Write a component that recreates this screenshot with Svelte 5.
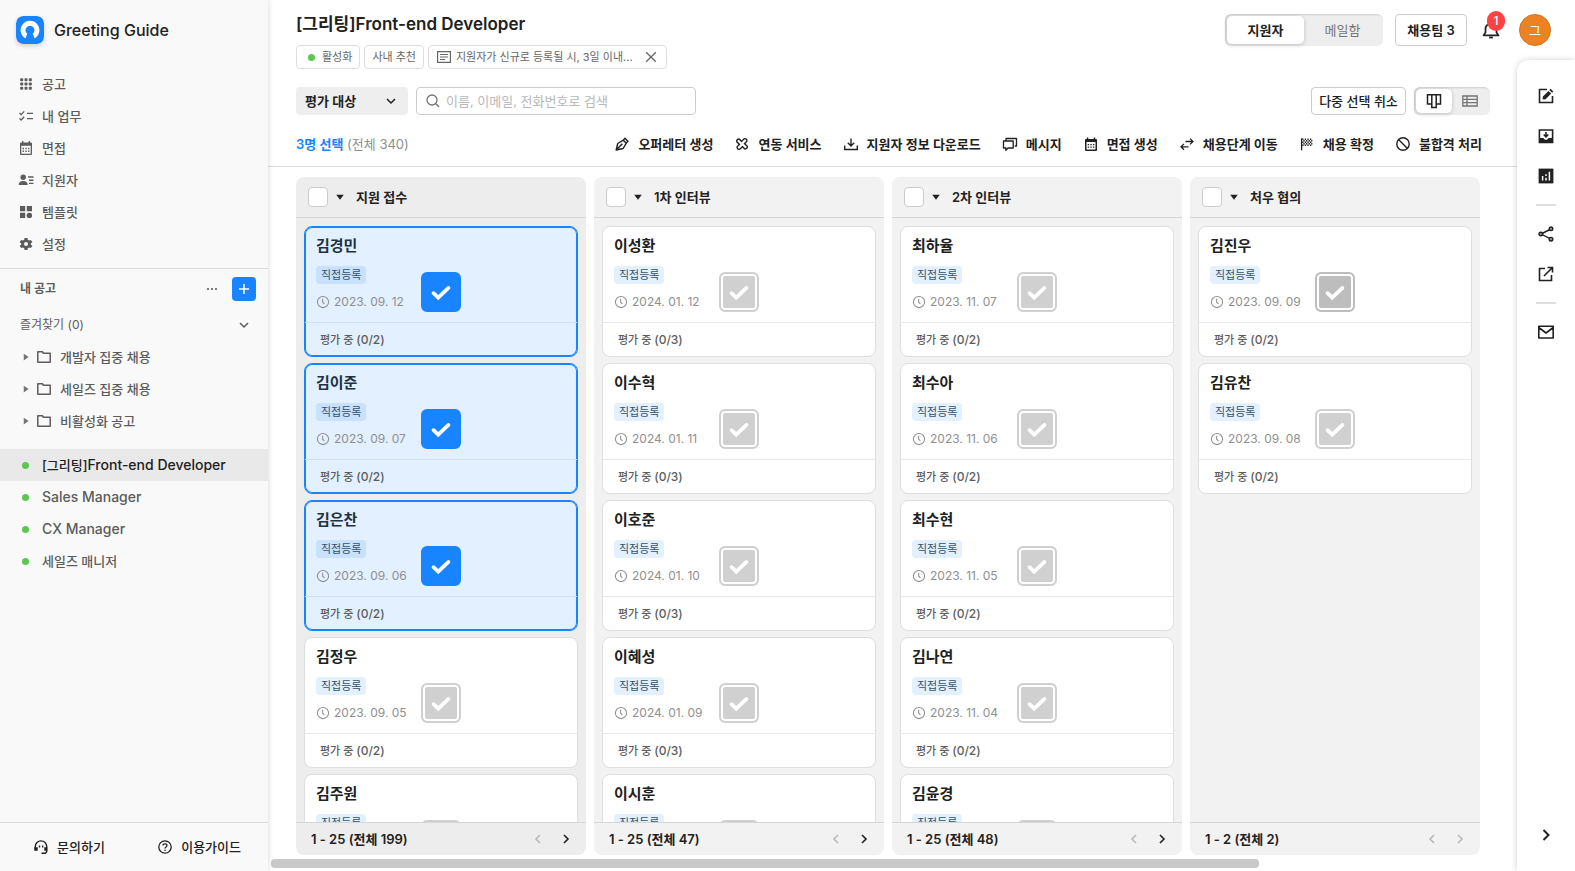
<script lang="ts">
  type Applicant = { name: string; date: string; reviewers: number; selected?: boolean };
  type Stage = { title: string; range: string; total: number; hasNext: boolean; applicants: Applicant[] };

  const menu = [
    { icon: 'apps', label: '공고' },
    { icon: 'tasks', label: '내 업무' },
    { icon: 'calendarFill', label: '면접' },
    { icon: 'people', label: '지원자' },
    { icon: 'widgets', label: '템플릿' },
    { icon: 'gear', label: '설정' },
  ];

  const folders = ['개발자 집중 채용', '세일즈 집중 채용', '비활성화 공고'];

  const openings = [
    { korean: '', label: 'Sales Manager' },
    { korean: '', label: 'CX Manager' },
    { korean: '세일즈 매니저', label: '' },
  ];

  const actions = [
    { icon: 'pen', label: '오퍼레터 생성' },
    { icon: 'link', label: '연동 서비스' },
    { icon: 'download', label: '지원자 정보 다운로드' },
    { icon: 'chat', label: '메시지' },
    { icon: 'calendar', label: '면접 생성' },
    { icon: 'swap', label: '채용단계 이동' },
    { icon: 'flag', label: '채용 확정' },
    { icon: 'ban', label: '불합격 처리' },
  ];

  const tools = [
    [
      { icon: 'edit', label: '작성' },
      { icon: 'inbox', label: '보관' },
      { icon: 'chart', label: '통계' },
    ],
    [
      { icon: 'share', label: '공유' },
      { icon: 'external', label: '새 창' },
    ],
    [{ icon: 'mail', label: '메일' }],
  ];

  let stages: Stage[] = $state([
    {
      title: '지원 접수', range: '1 - 25', total: 199, hasNext: true,
      applicants: [
        { name: '김경민', date: '2023. 09. 12', reviewers: 2, selected: true },
        { name: '김이준', date: '2023. 09. 07', reviewers: 2, selected: true },
        { name: '김은찬', date: '2023. 09. 06', reviewers: 2, selected: true },
        { name: '김정우', date: '2023. 09. 05', reviewers: 2 },
        { name: '김주원', date: '2023. 09. 04', reviewers: 2 },
      ],
    },
    {
      title: '1차 인터뷰', range: '1 - 25', total: 47, hasNext: true,
      applicants: [
        { name: '이성환', date: '2024. 01. 12', reviewers: 3 },
        { name: '이수혁', date: '2024. 01. 11', reviewers: 3 },
        { name: '이호준', date: '2024. 01. 10', reviewers: 3 },
        { name: '이혜성', date: '2024. 01. 09', reviewers: 3 },
        { name: '이시훈', date: '2024. 01. 08', reviewers: 3 },
      ],
    },
    {
      title: '2차 인터뷰', range: '1 - 25', total: 48, hasNext: true,
      applicants: [
        { name: '최하율', date: '2023. 11. 07', reviewers: 2 },
        { name: '최수아', date: '2023. 11. 06', reviewers: 2 },
        { name: '최수현', date: '2023. 11. 05', reviewers: 2 },
        { name: '김나연', date: '2023. 11. 04', reviewers: 2 },
        { name: '김윤경', date: '2023. 11. 03', reviewers: 2 },
      ],
    },
    {
      title: '처우 협의', range: '1 - 2', total: 2, hasNext: false,
      applicants: [
        { name: '김진우', date: '2023. 09. 09', reviewers: 2 },
        { name: '김유찬', date: '2023. 09. 08', reviewers: 2 },
      ],
    },
  ]);

  let selectedCount = $derived(stages.flatMap((s) => s.applicants).filter((a) => a.selected).length);

  // 16x16 grid, drawn with currentColor
  const icons: Record<string, string> = {
    apps: '<g fill="currentColor"><rect x="2.2" y="2.2" width="3" height="3" rx=".8"/><rect x="6.5" y="2.2" width="3" height="3" rx=".8"/><rect x="10.8" y="2.2" width="3" height="3" rx=".8"/><rect x="2.2" y="6.5" width="3" height="3" rx=".8"/><rect x="6.5" y="6.5" width="3" height="3" rx=".8"/><rect x="10.8" y="6.5" width="3" height="3" rx=".8"/><rect x="2.2" y="10.8" width="3" height="3" rx=".8"/><rect x="6.5" y="10.8" width="3" height="3" rx=".8"/><rect x="10.8" y="10.8" width="3" height="3" rx=".8"/></g>',
    tasks: '<path d="M1.5 5l1.6 1.6L6.2 3.4M1.5 10.4L3.1 12l3.1-3.2M9 5.3h6M9 10.7h6" stroke="currentColor" stroke-width="1.3" fill="none"/>',
    calendarFill: '<path fill-rule="evenodd" d="M4 1h1.4v1.5h5.2V1H12v1.5h1a1 1 0 0 1 1 1V14a1 1 0 0 1-1 1H3a1 1 0 0 1-1-1V3.5a1 1 0 0 1 1-1h1zM3.3 5.8v7.900h9.400V5.800z" fill="currentColor"/><path d="M4.600 8.500h1.400M7.300 8.500h1.400M10 8.500h1.400M4.600 11.200h1.400M7.300 11.200h1.400M10 11.200h1.400" stroke="currentColor" stroke-width="1.400"/>',
    calendar: '<path fill-rule="evenodd" d="M3.8 1.500h1.500v1.500h5.400V1.500h1.500V3h.8a1 1 0 0 1 1 1v10a1 1 0 0 1-1 1H3a1 1 0 0 1-1-1V4a1 1 0 0 1 1-1h.8zM3.500 6v7.500h9V6z" fill="currentColor"/><path d="M4.700 8.600h1.400M7.300 8.600h1.400M9.900 8.600h1.400M4.700 11.200h1.400M7.300 11.200h1.400M9.900 11.200h1.400" stroke="currentColor" stroke-width="1.300"/>',
    people: '<circle cx="5.200" cy="5.300" r="2.700" fill="currentColor"/><path d="M.7 13c0-2.500 1.600-3.900 4.500-3.900s4.500 1.400 4.500 3.900z" fill="currentColor"/><path d="M10 5h5.500M11 8.200h4.500M11 11.400h4.500" stroke="currentColor" stroke-width="1.400"/>',
    widgets: '<path d="M2 2h5.200v5.200H2zM8.800 2H14v5.200H8.800zM2 8.800h5.200V14H2z" fill="currentColor"/><circle cx="11.400" cy="11.400" r="2.700" fill="currentColor"/>',
    gear: '<path d="M6.500 2h3l.3 1.800 1.400.8 1.700-.7L14.400 6.200l-1.500 1.100v1.400l1.500 1.100-1.500 2.300-1.700-.7-1.400.8-.3 1.800h-3l-.3-1.800-1.400-.8-1.700.7L1.600 9.800l1.500-1.100V7.300L1.600 6.200l1.500-2.300 1.700.7 1.400-.8z" fill="currentColor"/><circle cx="8" cy="8" r="2" fill="#f9f9f9"/>',
    more: '<g fill="currentColor"><circle cx="4" cy="8" r="1.100"/><circle cx="8" cy="8" r="1.100"/><circle cx="12" cy="8" r="1.100"/></g>',
    plus: '<path d="M8 3v10M3 8h10" stroke="currentColor" stroke-width="1.500"/>',
    down: '<path d="M4 6l4 4 4-4" stroke="currentColor" stroke-width="1.500" fill="none"/>',
    left: '<path d="M10 4L6 8l4 4" stroke="currentColor" stroke-width="1.600" fill="none"/>',
    right: '<path d="M6 4l4 4-4 4" stroke="currentColor" stroke-width="1.600" fill="none"/>',
    caretRight: '<path d="M5 3.500v9l6.500-4.500z" fill="currentColor"/>',
    caretDown: '<path d="M3 5h10l-5 6.500z" fill="currentColor"/>',
    folder: '<path d="M1.800 13.200V2.800h4.600l1 1.400h6.800v9z" stroke="currentColor" stroke-width="1.500" fill="none" stroke-linejoin="round"/>',
    headset: '<path d="M2.300 10.200V7.600a5.700 5.700 0 0 1 11.400 0v5.200l-1.300 1.400H8.500" stroke="currentColor" stroke-width="1.400" fill="none"/><path d="M1.300 8.200h3.400v3.600H1.300zM11.300 8.200h3v3.600h-3zM5.800 6.500h1.400v2H5.800zM9 6.500h1.400v2H9z" fill="currentColor"/>',
    help: '<circle cx="8" cy="8" r="6.200" stroke="currentColor" stroke-width="1.300" fill="none"/><path d="M6 6.600c0-2.400 4-2.400 4 0 0 1.400-2 1.400-2 3" stroke="currentColor" stroke-width="1.200" fill="none"/><circle cx="8" cy="11.300" r=".8" fill="currentColor"/>',
    note: '<path d="M1.600 2.600h12.800v10.800H1.600zM4 5.500h8M4 8h8M4 10.500h5" stroke="currentColor" stroke-width="1.200" fill="none"/>',
    close: '<path d="M3.200 3.200l9.600 9.600M12.800 3.200l-9.600 9.600" stroke="currentColor" stroke-width="1.300"/>',
    search: '<circle cx="7" cy="7" r="5" stroke="currentColor" stroke-width="1.300" fill="none"/><path d="M10.600 10.600L14 14" stroke="currentColor" stroke-width="1.400"/>',
    pen: '<path d="M2.200 14l1.500-6.500 5.600-3.300 3 3-3.200 5.300zM2.200 14l4.900-4.900M9.500 4L11 2.200l3 3L12.300 7" stroke="currentColor" stroke-width="1.400" fill="none" stroke-linejoin="round"/><circle cx="7.600" cy="8.600" r="1" fill="currentColor"/>',
    link: '<path d="M7.200 5L5.400 3.200a2 2 0 0 0-2.600 2.600L5.600 8.600M11 7.200l1.800-1.800a2 2 0 0 0-2.600-2.600L7.400 5.600M8.800 11l1.800 1.800a2 2 0 0 0 2.600-2.600L10.400 7.400M5 8.800l-1.800 1.800a2 2 0 0 0 2.600 2.600l2.800-2.800" stroke="currentColor" stroke-width="1.400" fill="none" stroke-linecap="round"/>',
    download: '<path d="M8 2.500v7M4.800 6.700L8 9.900l3.200-3.200M1.700 9.500v4h12.600v-4" stroke="currentColor" stroke-width="1.400" fill="none"/>',
    chat: '<path d="M4 4.200V2.500h10.500V10h-1.800M1.500 5h9.700v7H6L3.800 14.300V12H1.500z" stroke="currentColor" stroke-width="1.300" fill="none" stroke-linejoin="round"/>',
    swap: '<path d="M6.500 5.500h7.300M11 2.600l3 2.900-3 2.900M9.500 10.800H2.200M5 7.900l-3 2.900 3 2.900" stroke="currentColor" stroke-width="1.300" fill="none"/>',
    flag: '<path d="M2.600 2.300v12" stroke="currentColor" stroke-width="1.300"/><path d="M3.200 3.200h9.300M4.400 4.700h9M3.200 6.200h9.300M4.400 7.700h9M3.200 9.200h9.300" stroke="currentColor" stroke-width="1.400" stroke-dasharray="1.300 1.300"/>',
    ban: '<circle cx="8" cy="8" r="6.200" stroke="currentColor" stroke-width="1.400" fill="none"/><path d="M3.800 3.800l8.400 8.400" stroke="currentColor" stroke-width="1.400"/>',
    board: '<path d="M1.500 1.800h4.300v9.200H1.500zM5.800 1.800h4.400v12.700H5.800zM10.200 1.800h4.300v9.200h-4.300z" stroke="currentColor" stroke-width="1.500" fill="none"/>',
    table: '<path d="M.8 3h14.400v10H.8zM.8 6.300h14.400M.8 9.700h14.400M5 3v10" stroke="currentColor" stroke-width="1.300" fill="none"/>',
    bell: '<path d="M2 12.300h12L12.400 10V7.200a4.400 4.400 0 0 0-8.800 0V10z" stroke="currentColor" stroke-width="1.400" fill="none" stroke-linejoin="round"/><path d="M6.500 14h3" stroke="currentColor" stroke-width="1.500"/>',
    edit: '<path d="M9 1.500H1.500v13h13V8" stroke="currentColor" stroke-width="1.600" fill="none"/><path d="M4.600 11.500l.3-3 5.600-5.600 2.700 2.700-5.600 5.700zM11.400 2l1.200-1.200 2.700 2.700-1.200 1.200z" fill="currentColor"/>',
    inbox: '<path fill-rule="evenodd" d="M.6 1.300h14.800v13.900H.6zM2.200 2.800v7.200h3.300c.5 1.200 1.400 1.800 2.500 1.800s2-.6 2.500-1.800h3.300V2.800z" fill="currentColor"/><path d="M8 4v4.500M5.700 6.500L8 8.800l2.300-2.300" stroke="currentColor" stroke-width="1.600" fill="none"/>',
    chart: '<path d="M.6.6h14.800v14.800H.6z" fill="currentColor"/><path d="M4.600 8v4.500M8 9.800v2.700M8 6.200v1.800M11.400 3.800v8.700" stroke="#fff" stroke-width="1.500"/>',
    share: '<path d="M3 8l10-5M3 8l10 5.200" stroke="currentColor" stroke-width="1.400"/><g fill="#999" stroke="currentColor" stroke-width="1.400"><circle cx="2.800" cy="8" r="1.800"/><circle cx="13" cy="2.800" r="1.800"/><circle cx="13" cy="13.200" r="1.800"/></g>',
    external: '<path d="M7 2.500H1.500v12h12V9M9.500 1.500h5v5M14.200 1.800L6 10" stroke="currentColor" stroke-width="1.600" fill="none"/>',
    mail: '<path d="M.8 2.200h14.400v11.800H.8zM.8 3.500L8 9l7.200-5.500" stroke="currentColor" stroke-width="1.600" fill="none" stroke-linejoin="round"/>',
    clock: '<circle cx="8" cy="8" r="6.400" stroke="currentColor" stroke-width="1.200" fill="none"/><path d="M7.600 4.200v4l2 2" stroke="currentColor" stroke-width="1.200" fill="none"/>',
    check: '<path d="M3.400 8.700l2.900 2.800L12.600 5.500" stroke="currentColor" stroke-width="2.300" fill="none" stroke-linecap="round"/>',
  };
</script>

{#snippet icon(name: string, size = 16)}
  <svg width={size} height={size} viewBox="0 0 16 16" aria-hidden="true">{@html icons[name]}</svg>
{/snippet}

<div class="app">
  <aside class="sidebar">
    <div class="brand">
      <svg class="logo" width="28" height="28" viewBox="0 0 28 28" aria-hidden="true">
        <rect width="28" height="28" rx="7" fill="#1884ff" />
        <path d="M9.600 22.400A9.400 9.400 0 1 1 18.400 22.400L16.600 17.800A4.500 4.500 0 1 0 11.400 17.800z" fill="#fff" />
        <path d="M11.400 17.500h5.200l1.900 5.500h-9z" fill="#1884ff" />
      </svg>
      <strong>Greeting Guide</strong>
    </div>

    <nav class="menu">
      {#each menu as item}
        <a href="#{item.icon}">{@render icon(item.icon)}{item.label}</a>
      {/each}
    </nav>

    <div class="mine">
      <div class="mine-head">
        <strong>내 공고</strong>
        <button class="more" aria-label="더보기">{@render icon('more')}</button>
        <button class="add" aria-label="공고 추가">{@render icon('plus')}</button>
      </div>
      <button class="favorites">즐겨찾기 (0){@render icon('down')}</button>
      {#each folders as folder}
        <button class="folder">{@render icon('caretRight', 12)}{@render icon('folder')}<span>{folder}</span></button>
      {/each}
    </div>

    <nav class="openings">
      <a href="#frontend" class="active"><i class="dot"></i><span>[그리팅]<span class="latin">Front-end Developer</span></span></a>
      {#each openings as opening}
        <a href="#opening"><i class="dot"></i><span>{opening.korean}<span class="latin">{opening.label}</span></span></a>
      {/each}
    </nav>

    <footer>
      <a href="#contact">{@render icon('headset')}문의하기</a>
      <a href="#guide">{@render icon('help')}이용가이드</a>
    </footer>
  </aside>

  <div class="page">
    <header class="topbar">
      <div class="heading">
        <h1>[그리팅]<span>Front-end Developer</span></h1>
        <div class="chips">
          <span class="chip status"><i class="dot"></i>활성화</span>
          <span class="chip">사내 추천</span>
          <span class="chip memo">
            {@render icon('note')}지원자가 신규로 등록될 시, 3일 이내...
            <button aria-label="메모 닫기">{@render icon('close')}</button>
          </span>
        </div>
      </div>
      <div class="account">
        <div class="segment">
          <button class="on">지원자</button>
          <button>메일함</button>
        </div>
        <button class="outline team">채용팀 3</button>
        <button class="bell" aria-label="알림">{@render icon('bell', 20)}<span class="count">1</span></button>
        <button class="avatar">그</button>
      </div>
    </header>

    <div class="body">
      <main>
        <div class="filters">
          <div class="select">
            <select aria-label="평가 대상"><option>평가 대상</option></select>
            {@render icon('down')}
          </div>
          <label class="search">
            {@render icon('search')}
            <input type="text" placeholder="이름, 이메일, 전화번호로 검색" aria-label="검색" />
          </label>
          <button class="outline cancel">다중 선택 취소</button>
          <div class="segment view">
            <button class="on" aria-label="보드 보기">{@render icon('board')}</button>
            <button aria-label="표 보기">{@render icon('table')}</button>
          </div>
        </div>

        <div class="actions">
          <p><strong>{selectedCount}명 선택</strong> (전체 340)</p>
          {#each actions as action}
            <button>{@render icon(action.icon)}{action.label}</button>
          {/each}
        </div>

        <div class="board">
          {#each stages as stage, i}
            <section class="stage" class:first={i === 0}>
              <div class="stage-head">
                <input type="checkbox" aria-label="{stage.title} 전체 선택" />
                {@render icon('caretDown', 12)}
                <h2>{stage.title}</h2>
              </div>
              <div class="cards">
                {#each stage.applicants as person, j}
                  <article class="card" class:selected={person.selected}>
                    <div class="info">
                      <h3>{person.name}</h3>
                      <span class="badge">직접등록</span>
                      <span class="date">{@render icon('clock', 14)}{person.date}</span>
                    </div>
                    <p>평가 중 <span>(0/{person.reviewers})</span></p>
                    <label class="tick" class:dark={i === 3 && j === 0}>
                      <input type="checkbox" bind:checked={person.selected} aria-label="{person.name} 선택" />
                      {@render icon('check', 26)}
                    </label>
                  </article>
                {/each}
              </div>
              <div class="stage-foot">
                <span>{stage.range} (전체 {stage.total})</span>
                <button disabled aria-label="이전">{@render icon('left')}</button>
                <button disabled={!stage.hasNext} aria-label="다음">{@render icon('right')}</button>
              </div>
            </section>
          {/each}
        </div>
        <div class="scroll"><div></div></div>
      </main>

      <aside class="rail">
        {#each tools as group}
          <div class="group">
            {#each group as tool}
              <button aria-label={tool.label}>{@render icon(tool.icon)}</button>
            {/each}
          </div>
        {/each}
        <button class="collapse" aria-label="접기">{@render icon('right', 20)}</button>
      </aside>
    </div>
  </div>
</div>

<style>
  :global(body) {
    margin: 0;
  }

  .app {
    display: flex;
    height: 100vh;
    overflow: hidden;
    background: #fff;
    color: #212121;
    font: 500 13px/20px Inter, 'Noto Sans CJK KR', sans-serif;
  }

  .app * {
    box-sizing: border-box;
  }

  svg {
    display: block;
    flex: none;
  }

  button,
  input,
  select {
    padding: 0;
    border: 0;
    background: none;
    color: inherit;
    font: inherit;
  }

  a {
    color: inherit;
    text-decoration: none;
  }

  h1,
  h2,
  h3,
  p {
    margin: 0;
  }

  .dot {
    flex: none;
    width: 7px;
    height: 7px;
    border-radius: 50%;
    background: #5bc951;
  }

  .latin {
    font-size: 14px;
  }

  .sidebar {
    display: flex;
    flex: none;
    flex-direction: column;
    width: 268px;
    background: #f9f9f9;
    color: #5c5c5c;
    box-shadow: 0 0 6px rgba(0, 0, 0, 0.16);
    z-index: 1;
  }

  .brand {
    display: flex;
    align-items: center;
    gap: 10px;
    padding: 16px 16px 24px;
    color: #212121;
    font-size: 16px;
  }

  .brand strong {
    font-weight: 500;
  }

  .logo {
    border-radius: 7px;
    box-shadow: 0 2px 4px rgba(0, 0, 0, 0.16);
  }

  .menu {
    padding-bottom: 8px;
    border-bottom: 1px solid #dcdcdc;
  }

  .menu a {
    display: flex;
    align-items: center;
    gap: 8px;
    height: 32px;
    padding-left: 18px;
  }

  .mine-head {
    display: flex;
    align-items: center;
    padding: 8px 12px 8px 20px;
    font-size: 12px;
  }

  .mine-head strong {
    flex: 1;
    font-weight: 600;
  }

  .more {
    margin-right: 12px;
  }

  .add {
    padding: 4px;
    border-radius: 4px;
    background: #1884ff;
    color: #fff;
  }

  .favorites {
    display: flex;
    align-items: center;
    justify-content: space-between;
    width: 100%;
    height: 32px;
    padding: 0 16px 0 20px;
    font-size: 12px;
    font-weight: 400;
  }

  .folder {
    display: flex;
    align-items: center;
    width: 100%;
    height: 32px;
    padding-left: 20px;
  }

  .folder svg:first-child {
    margin-right: 4px;
    color: #757575;
  }

  .folder span {
    margin-left: 8px;
  }

  .openings {
    flex: 1;
    padding-top: 12px;
  }

  .openings a {
    display: flex;
    align-items: center;
    gap: 13px;
    height: 32px;
    padding-left: 22px;
  }

  .openings .active {
    background: #e9e9e9;
    color: #212121;
  }

  .sidebar footer {
    display: flex;
    align-items: center;
    justify-content: space-between;
    height: 49px;
    padding: 0 27px 0 33px;
    border-top: 1px solid #dcdcdc;
    color: #212121;
  }

  .sidebar footer a {
    display: flex;
    align-items: center;
    gap: 8px;
  }

  .page {
    display: flex;
    flex: 1;
    flex-direction: column;
    min-width: 0;
  }

  .topbar {
    display: flex;
    justify-content: space-between;
    height: 60px;
    padding: 12px 24px 0 28px;
  }

  h1 {
    font-size: 17px;
    font-weight: 600;
    line-height: 24px;
  }

  .chips {
    display: flex;
    gap: 4px;
    margin-top: 9px;
    color: #666;
    font-size: 11px;
    font-weight: 400;
  }

  .chip {
    display: flex;
    align-items: center;
    height: 24px;
    padding: 0 7px;
    border: 1px solid #dedede;
    border-radius: 4px;
    white-space: nowrap;
  }

  .status {
    gap: 7px;
    padding-left: 11px;
  }

  .memo {
    gap: 4px;
  }

  .memo button {
    margin-left: 6px;
  }

  .account {
    display: flex;
    align-items: center;
    height: 32px;
    margin-top: 2px;
  }

  .segment {
    display: flex;
    padding: 2px;
    border-radius: 6px;
    background: #eee;
    box-shadow: inset 1px 1px 2px rgba(0, 0, 0, 0.14);
  }

  .segment button {
    display: grid;
    place-items: center;
    width: 77px;
    height: 28px;
    border-radius: 5px;
    color: #757575;
    font-weight: 400;
  }

  .segment .on {
    background: #fff;
    color: #212121;
    font-weight: 600;
    box-shadow: 0 1px 4px rgba(0, 0, 0, 0.2);
  }

  .outline {
    border: 1px solid #ccc;
    border-radius: 4px;
  }

  .team {
    width: 72px;
    height: 32px;
    margin: 0 14px 0 12px;
    font-weight: 600;
  }

  .bell {
    position: relative;
    margin-right: 18px;
  }

  .count {
    position: absolute;
    top: -9px;
    right: -4px;
    width: 18px;
    height: 20px;
    border-radius: 10px;
    background: #ff4242;
    color: #fff;
    font-size: 12px;
  }

  .avatar {
    width: 32px;
    height: 32px;
    border: 1px solid #c9762b;
    border-radius: 50%;
    background: #ee8222;
    color: #fff;
    font-size: 13px;
    font-weight: 400;
  }

  .body {
    display: flex;
    flex: 1;
    min-height: 0;
  }

  main {
    display: flex;
    flex: 1;
    flex-direction: column;
    min-width: 0;
  }

  .filters {
    display: flex;
    gap: 8px;
    padding: 27px 27px 0 28px;
  }

  .select {
    display: grid;
    align-items: center;
    width: 112px;
    height: 28px;
    border-radius: 4px;
    background: #eee;
    font-weight: 600;
  }

  .select > * {
    grid-area: 1 / 1;
  }

  .select select {
    height: 28px;
    padding: 0 9px;
    appearance: none;
  }

  .select svg {
    justify-self: end;
    margin-right: 9px;
    pointer-events: none;
  }

  .search {
    display: flex;
    align-items: center;
    gap: 5px;
    width: 280px;
    height: 28px;
    padding: 0 8px;
    border: 1px solid #ccc;
    border-radius: 4px;
    color: #757575;
    font-weight: 400;
  }

  .search input {
    flex: 1;
    min-width: 0;
    outline: 0;
  }

  .search input::placeholder {
    color: #b8b8b8;
  }

  .cancel {
    width: 95px;
    margin-left: auto;
  }

  .view {
    height: 28px;
  }

  .view button {
    width: 36px;
    height: 24px;
  }

  .actions {
    display: flex;
    align-items: center;
    gap: 21px;
    height: 52px;
    padding: 6px 35px 0 28px;
    border-bottom: 1px solid #dcdcdc;
    white-space: nowrap;
  }

  .actions p {
    flex: 1;
    color: #8f8f8f;
    font-weight: 400;
  }

  .actions strong {
    color: #1884ff;
    font-weight: 600;
  }

  .actions button {
    display: flex;
    align-items: center;
    gap: 8px;
    font-weight: 600;
  }

  .board {
    display: flex;
    flex: 1;
    gap: 8px;
    min-height: 0;
    padding: 10px 27px 4px 28px;
    overflow: hidden;
  }

  .stage {
    display: flex;
    flex: none;
    flex-direction: column;
    width: 290px;
    border-radius: 8px;
    background: #f2f2f2;
  }

  .first {
    background: #ededed;
  }

  .stage-head {
    display: flex;
    align-items: center;
    height: 41px;
    padding: 0 12px;
    border-bottom: 1px solid #d6d6d6;
  }

  .stage-head input {
    width: 20px;
    height: 20px;
    margin: 0 6px 0 0;
    border: 1px solid #ccc;
    border-radius: 4px;
    background: #fff;
    appearance: none;
  }

  h2 {
    margin-left: 10px;
    font-size: 13px;
    font-weight: 600;
  }

  .cards {
    display: flex;
    flex: 1;
    flex-direction: column;
    gap: 6px;
    min-height: 0;
    padding: 8px 8px 0;
    overflow: hidden;
  }

  .card {
    position: relative;
    flex: none;
    border: 1px solid #dedede;
    border-radius: 8px;
    background: #fff;
  }

  .card.selected {
    border-color: #1884ff;
    background: #e2f0ff;
    box-shadow: inset 0 0 0 1px #1884ff;
    color: #223044;
  }

  .info {
    display: flex;
    flex-direction: column;
    align-items: flex-start;
    height: 96px;
    padding: 7px 11px 0;
    border-bottom: 1px solid #e8e8e8;
  }

  .selected .info {
    border-color: #d0dff0;
  }

  h3 {
    font-size: 15px;
    font-weight: 600;
    line-height: 24px;
  }

  .badge {
    margin-top: 8px;
    padding: 0 5px;
    border-radius: 4px;
    background: #e2f0ff;
    color: #35506e;
    font-size: 11px;
    font-weight: 400;
    line-height: 18px;
  }

  .selected .badge {
    background: #c7e1fe;
  }

  .date {
    display: flex;
    align-items: center;
    gap: 4px;
    margin-top: 8px;
    color: #8f8f8f;
    font-size: 12px;
    font-weight: 400;
  }

  .card p {
    padding: 7px 15px 6px;
    color: #5c5c5c;
    font-size: 11px;
  }

  .card p span {
    font-size: 12px;
  }

  .tick {
    position: absolute;
    top: 50%;
    left: 50%;
    display: grid;
    place-items: center;
    width: 40px;
    height: 40px;
    margin: -20px 0 0 -20px;
    color: #fff;
  }

  .tick > * {
    grid-area: 1 / 1;
  }

  .tick input {
    width: 40px;
    height: 40px;
    margin: 0;
    border: 2px solid #d0d0d0;
    border-radius: 6px;
    background: #d0d0d0;
    box-shadow: inset 0 0 0 2px #fff;
    appearance: none;
  }

  .tick.dark input {
    border-color: #bdbdbd;
    background: #bdbdbd;
  }

  .tick input:checked {
    border-color: #1884ff;
    background: #1884ff;
    box-shadow: none;
  }

  .tick svg {
    pointer-events: none;
  }

  .stage-foot {
    display: flex;
    align-items: center;
    gap: 12px;
    height: 33px;
    padding: 0 12px 0 15px;
    border-top: 1px solid #d6d6d6;
    font-weight: 600;
  }

  .stage-foot span {
    flex: 1;
  }

  .stage-foot button:disabled {
    color: #b8b8b8;
  }

  .scroll {
    flex: none;
    height: 12px;
    padding: 0 3px;
  }

  .scroll div {
    width: 79.5%;
    height: 9px;
    border-radius: 4px;
    background: #c9c9c9;
  }

  .rail {
    display: flex;
    flex: none;
    flex-direction: column;
    align-items: center;
    width: 58px;
    padding-top: 16px;
    border-radius: 12px 0 0 0;
    background: #fff;
    box-shadow: 0 0 6px rgba(0, 0, 0, 0.18);
  }

  .rail button {
    display: grid;
    place-items: center;
    width: 40px;
    height: 40px;
  }

  .group + .group::before {
    content: '';
    display: block;
    width: 20px;
    height: 2px;
    margin: 8px 10px;
    background: #dedede;
  }

  .rail .collapse {
    margin: auto 0 16px;
  }
</style>
